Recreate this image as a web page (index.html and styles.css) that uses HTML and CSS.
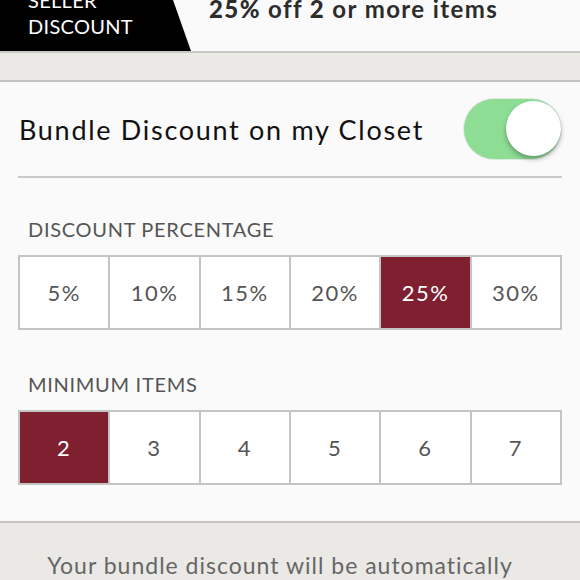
FILE: index.html
```html
<!DOCTYPE html>
<html>
<head>
<meta charset="utf-8">
<link rel="stylesheet" href="styles.css">
</head>
<body>
<div class="header">
  <div class="banner"><div class="banner-text">SELLER<br>DISCOUNT</div></div>
  <div class="headline"><b>25%</b> off <b>2</b> or more items</div>
</div>
<div class="band"></div>
<div class="panel">
  <div class="toggle-row">
    <div class="toggle-label">Bundle Discount on my Closet</div>
    <div class="toggle"><div class="knob"></div></div>
  </div>
  <div class="section-title">DISCOUNT PERCENTAGE</div>
  <div class="options">
    <div class="opt">5%</div>
    <div class="opt">10%</div>
    <div class="opt">15%</div>
    <div class="opt">20%</div>
    <div class="opt sel">25%</div>
    <div class="opt">30%</div>
  </div>
  <div class="section-title second">MINIMUM ITEMS</div>
  <div class="options">
    <div class="opt sel">2</div>
    <div class="opt">3</div>
    <div class="opt">4</div>
    <div class="opt">5</div>
    <div class="opt">6</div>
    <div class="opt">7</div>
  </div>
</div>
<div class="footer">
  <div class="note">Your bundle discount will be automatically</div>
</div>
</body>
</html>
```
FILE: styles.css
```css
html, body {
  margin: 0;
  padding: 0;
  background: #ebe9e5;
  font-family: "Lato", "Open Sans", sans-serif;
  overflow: hidden;
}
.header {
  height: 51px;
  background: #fafafa;
  border-bottom: 2px solid #c9c7c4;
  display: flex;
  align-items: flex-start;
  overflow: hidden;
}
.banner {
  width: 191px;
  height: 51px;
  background: #000;
  clip-path: polygon(0 0, 173px 0, 191px 100%, 0 100%);
  display: flex;
  align-items: flex-end;
  flex: none;
}
.banner-text {
  color: #fff;
  font-size: 20px;
  line-height: 26px;
  padding-left: 28px;
  padding-bottom: 12px;
  letter-spacing: 0.3px;
}
.headline {
  margin-left: 18px;
  margin-top: -5px;
  font-size: 24px;
  line-height: 28px;
  font-weight: 700;
  color: #2c2c2c;
  letter-spacing: 1.4px;
}
.headline b { font-weight: 900; }
.band {
  height: 27px;
  border-bottom: 2px solid #c5c3c0;
}
.panel {
  background: #fafafa;
  padding: 0 18px;
  height: 439px;
  border-bottom: 2px solid #c5c3c0;
}
.toggle-row {
  height: 94px;
  border-bottom: 2px solid #cacaca;
  display: flex;
  align-items: center;
  justify-content: space-between;
  padding-left: 1px;
}
.toggle-label {
  font-size: 27px;
  color: #111;
  letter-spacing: 1.7px;
}
.toggle {
  width: 97px;
  height: 60px;
  border-radius: 30px;
  background: #8ddd95;
  position: relative;
  margin-right: 1px;
  box-shadow: 0 0 0 1px #e3e8e3;
}
.knob {
  position: absolute;
  right: 0;
  top: 2px;
  width: 55px;
  height: 55px;
  border-radius: 50%;
  background: #fff;
  box-shadow: 0 3px 5px rgba(0,0,0,0.3);
}
.section-title {
  font-size: 20px;
  color: #555;
  padding-left: 10px;
  margin-top: 40px;
  line-height: 22px;
  letter-spacing: 0.7px;
}
.section-title.second { margin-top: 43px; }
.options {
  display: grid;
  grid-template-columns: repeat(6, 1fr);
  margin-top: 15px;
  border: 2px solid #c4c4c4;
  border-right: none;
  background: #fff;
  height: 71px;
}
.opt {
  border-right: 2px solid #c4c4c4;
  display: flex;
  align-items: center;
  justify-content: center;
  font-size: 22px;
  color: #555;
  letter-spacing: 1.5px;
}
.opt.sel {
  background: #7e2030;
  color: #fff;
}
.footer {
  padding-top: 28px;
  padding-right: 20px;
  text-align: center;
}
.note {
  font-size: 23px;
  color: #666;
  letter-spacing: 1px;
}
```
